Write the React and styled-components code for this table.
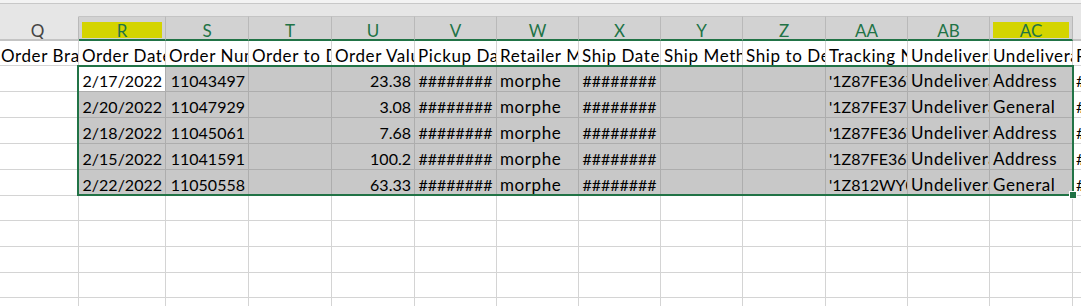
import styled, { createGlobalStyle } from 'styled-components'

const GlobalStyle = createGlobalStyle`
    html, body {
        margin: 0;
        background: #ffffff;
    }
    body {
        font-family: Lato, "Liberation Sans", sans-serif;
        font-size: 16px;
        color: #000000;
    }
`

const columns = [
    { id: 'Q', w: 82, head: 'Order Brand' },
    { id: 'R', w: 87, head: 'Order Date', sel: true, mark: true },
    { id: 'S', w: 83, head: 'Order Number', sel: true },
    { id: 'T', w: 83, head: 'Order to DC', sel: true },
    { id: 'U', w: 83, head: 'Order Value', sel: true },
    { id: 'V', w: 82, head: 'Pickup Date', sel: true },
    { id: 'W', w: 82, head: 'Retailer Margin', sel: true },
    { id: 'X', w: 82, head: 'Ship Date', sel: true },
    { id: 'Y', w: 82, head: 'Ship Method', sel: true },
    { id: 'Z', w: 83, head: 'Ship to Destination', sel: true },
    { id: 'AA', w: 82, head: 'Tracking Number', sel: true },
    { id: 'AB', w: 82, head: 'Undeliverable', sel: true },
    { id: 'AC', w: 83, head: 'Undeliverable Reason', sel: true, mark: true },
    { id: 'AD', w: 60, head: 'Return Date' },
]

// one row of the order export, Q..AD
const HASH = '########'
const orders = [
    ['2/17/2022', '11043497', '23.38', "'1Z87FE36Y0392814", 'Address'],
    ['2/20/2022', '11047929', '3.08', "'1Z87FE370392001", 'General'],
    ['2/18/2022', '11045061', '7.68', "'1Z87FE36Y0392744", 'Address'],
    ['2/15/2022', '11041591', '100.2', "'1Z87FE36Y0390118", 'Address'],
    ['2/22/2022', '11050558', '63.33', "'1Z812WY0392115", 'General'],
]

const toCells = ([date, num, value, tracking, reason]) => [
    { v: '' },
    { v: date, a: 'right', n: true },
    { v: num, a: 'right', n: true },
    { v: '' },
    { v: value, a: 'right', n: true },
    { v: HASH, a: 'center', n: true },
    { v: 'morphe' },
    { v: HASH, a: 'center', n: true },
    { v: '' },
    { v: '' },
    { v: tracking, n: true },
    { v: 'Undeliverable' },
    { v: reason },
    { v: HASH, n: true },
]

const emptyRows = [25, 26, 26, 25, 26]

const App = () => {
    const template = columns.map((c) => `${c.w}px`).join(' ')
    const rowTemplate = `25px 25px repeat(5, 26px) ${emptyRows.map((h) => `${h}px`).join(' ')}`

    return (
        <>
            <GlobalStyle />
            <Viewport>
                <TopBand />
                <Sheet $cols={template} $rows={rowTemplate}>
                    {columns.map((c) => (
                        <ColHead key={c.id} $sel={c.sel}>
                            <Letter $sel={c.sel} $mark={c.mark}>{c.id}</Letter>
                        </ColHead>
                    ))}

                    {columns.map((c) => (
                        <Cell key={'h' + c.id} $first={c.id === 'Q'}>{c.head}</Cell>
                    ))}

                    {orders.map((o, r) =>
                        toCells(o).map((cell, i) => (
                            <Cell
                                key={r + '-' + i}
                                $align={cell.a}
                                $num={cell.n}
                                $sel={i >= 1 && i <= 12}
                                $active={r === 0 && i === 1}
                            >
                                {cell.v}
                            </Cell>
                        ))
                    )}

                    {emptyRows.map((h, r) =>
                        columns.map((c) => <Cell key={'e' + r + c.id} />)
                    )}

                    <Selection>
                        <FillHandle />
                    </Selection>
                </Sheet>
            </Viewport>
        </>
    )
}

export default App

const Viewport = styled.div`
    width: 1081px;
    height: 306px;
    overflow: hidden;
    background: #ffffff;
`

const TopBand = styled.div`
    height: 13px;
    background: #e6e6e6;
    border-top: 3px solid #f3f3f3;
    box-shadow: inset 0 1px 0 #c8c8c8;
`

const Sheet = styled.div`
    position: relative;
    display: grid;
    grid-template-columns: ${(p) => p.$cols};
    grid-template-rows: ${(p) => p.$rows};
    margin-left: -3px;
    width: max-content;
`

const ColHead = styled.div`
    box-sizing: border-box;
    display: flex;
    overflow: hidden;
    padding: 5px 3px 1px 3px;
    background: ${(p) => (p.$sel ? '#d2d2d2' : '#e6e6e6')};
    border-top: 1px solid ${(p) => (p.$sel ? '#c4c4c4' : '#e6e6e6')};
    border-right: 1px solid #b9b9b9;
    border-bottom: 2px solid ${(p) => (p.$sel ? '#217346' : '#c4c4c4')};
`

const Letter = styled.span`
    flex: 1;
    display: flex;
    align-items: center;
    justify-content: center;
    font-size: 17px;
    color: ${(p) => (p.$sel ? '#217346' : '#444444')};
    background: ${(p) => (p.$mark ? '#d4d400' : 'transparent')};
`

const Cell = styled.div`
    box-sizing: border-box;
    overflow: hidden;
    white-space: nowrap;
    padding: 4px 3px 0 3px;
    padding-left: ${(p) => (p.$first ? '4px' : '3px')};
    line-height: 21px;
    font-size: ${(p) => (p.$num ? '16px' : '17px')};
    letter-spacing: ${(p) => (p.$num ? '0' : '0.6px')};
    text-align: ${(p) => p.$align || 'left'};
    background: ${(p) => (p.$active ? '#ffffff' : p.$sel ? '#c8c8c8' : '#ffffff')};
    border-right: 1px solid ${(p) => (p.$sel ? '#adadad' : '#d4d4d4')};
    border-bottom: 1px solid ${(p) => (p.$sel ? '#adadad' : '#d4d4d4')};
`

const Selection = styled.div`
    position: absolute;
    grid-column: 2 / 14;
    grid-row: 3 / 8;
    top: -1px;
    left: -2px;
    right: -1px;
    bottom: 0;
    border: 2px solid #217346;
    pointer-events: none;
`

const FillHandle = styled.div`
    position: absolute;
    right: -5px;
    bottom: -5px;
    width: 6px;
    height: 6px;
    background: #217346;
    border: 1px solid #ffffff;
`
